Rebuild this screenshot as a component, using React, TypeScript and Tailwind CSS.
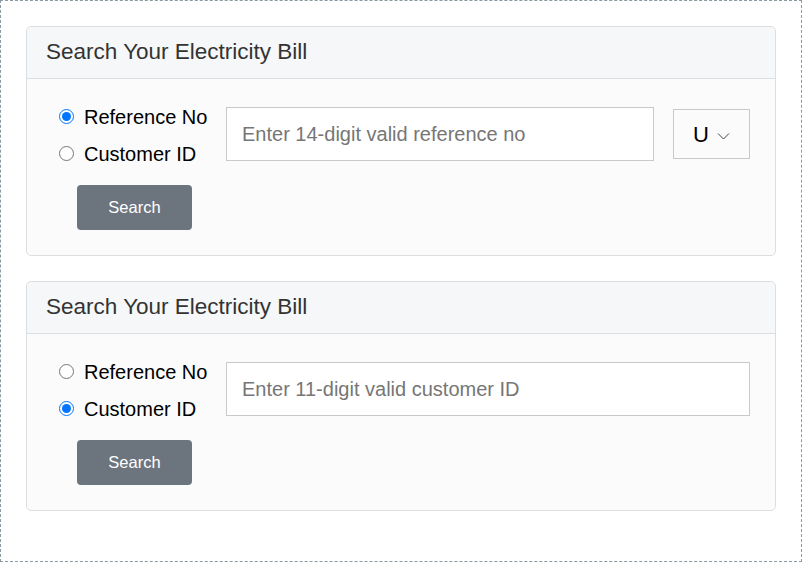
import { useState } from "react";

function BillCard({ mode, withUnit }: { mode: "ref" | "cust"; withUnit?: boolean }) {
  const [sel, setSel] = useState(mode);
  return (
    <div className="rounded-[5px] border border-[#dcdfe2] bg-[#fbfbfb]">
      <div className="h-[52px] border-b border-[#dcdfe2] bg-[#f6f7f8] px-[19px] flex items-center rounded-t-[5px]">
        <h2 className="text-[22.5px] text-[#333] leading-none">Search Your Electricity Bill</h2>
      </div>
      <div className="pt-[19px] pb-[25px] pl-[32px] pr-[25px]">
        <div className="flex items-start">
          <div className="flex flex-col w-[167px] shrink-0">
            <label className="flex items-center h-[37px] text-[20px] text-black">
              <input
                type="radio"
                checked={sel === "ref"}
                onChange={() => setSel("ref")}
                className="w-[15px] h-[15px] m-0 mr-[10px] accent-[#0075ff]"
              />
              Reference No
            </label>
            <label className="flex items-center h-[37px] text-[20px] text-black">
              <input
                type="radio"
                checked={sel === "cust"}
                onChange={() => setSel("cust")}
                className="w-[15px] h-[15px] m-0 mr-[10px] accent-[#0075ff]"
              />
              Customer ID
            </label>
          </div>
          <input
            type="text"
            placeholder={
              mode === "ref" ? "Enter 14-digit valid reference no" : "Enter 11-digit valid customer ID"
            }
            className={`h-[54px] mt-[9px] border border-[#c9c9c9] bg-white px-[15px] text-[20px] text-black placeholder:text-[#767676] outline-none ${
              withUnit ? "w-[428px] shrink-0" : "flex-1 min-w-0"
            }`}
          />
          {withUnit && (
            <button className="ml-[19px] mt-[11px] h-[50px] w-[77px] shrink-0 border border-[#c9c9c9] bg-[#fbfbfb] flex items-center justify-center gap-[8px] text-[22px] text-black">
              U
              <svg width="13" height="8" viewBox="0 0 13 8" fill="none" className="mt-[3px]">
                <path d="M1 1.5l5.5 5.5 5.5-5.5" stroke="#444" strokeWidth="1" />
              </svg>
            </button>
          )}
        </div>
        <button className="mt-[13px] ml-[18px] h-[45px] w-[115px] rounded-[4px] bg-[#6c757d] text-white text-[16.5px]">
          Search
        </button>
      </div>
    </div>
  );
}

export default function App() {
  return (
    <div className="w-[803px] h-[563px] bg-white font-['Liberation_Sans',Arial,sans-serif]">
      <div className="w-[802px] h-[562px] border border-dashed border-[#8a9aa0] px-[25px] pt-[25px] flex flex-col gap-[25px]">
        <BillCard mode="ref" withUnit />
        <BillCard mode="cust" />
      </div>
    </div>
  );
}
